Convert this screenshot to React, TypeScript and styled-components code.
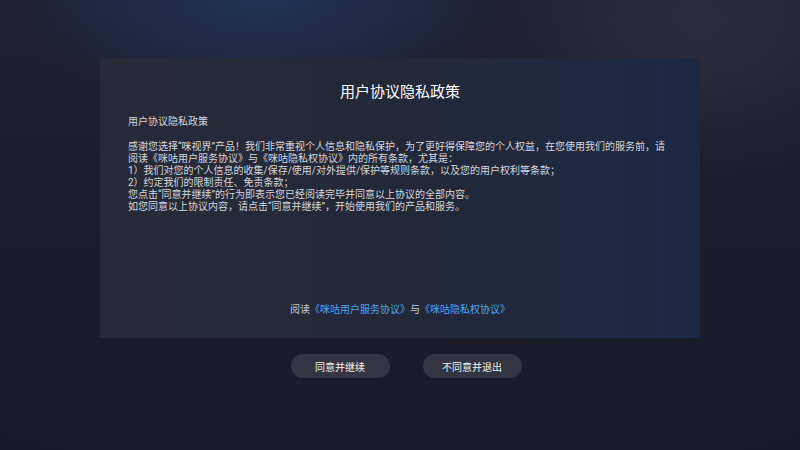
import React from "react";
import styled, { createGlobalStyle } from "styled-components";

const GlobalStyle = createGlobalStyle`
  html, body {
    margin: 0;
    padding: 0;
    width: 800px;
    height: 450px;
    overflow: hidden;
    background: #1a1b28;
  }
  * { box-sizing: border-box; }
`;

const Screen = styled.div`
  width: 800px;
  height: 450px;
  padding-top: 58px;
  display: flex;
  flex-direction: column;
  align-items: center;
  font-family: Roboto, "Noto Sans CJK SC", sans-serif;
  background:
    radial-gradient(ellipse 260px 110px at 260px 0px, rgba(34, 58, 100, 0.75), rgba(34, 58, 100, 0) 100%),
    radial-gradient(ellipse 220px 160px at 700px 20px, rgba(52, 50, 66, 0.7), rgba(52, 50, 66, 0) 100%),
    radial-gradient(ellipse 500px 200px at 400px 470px, rgba(28, 28, 42, 0.6), rgba(28, 28, 42, 0) 100%),
    linear-gradient(180deg, #1f2030 0%, #1b1c2a 60%, #191a27 100%);
`;

const Panel = styled.section`
  width: 600px;
  height: 280px;
  padding: 24px 28px 22px;
  display: flex;
  flex-direction: column;
  background: linear-gradient(90deg, #282a38 0%, #232839 50%, #1c2842 100%);
`;

const Title = styled.h1`
  margin: 0;
  font-size: 15px;
  line-height: 20px;
  font-weight: 400;
  color: #ffffff;
  text-align: center;
`;

const Heading = styled.div`
  margin-top: 14px;
  font-size: 10px;
  line-height: 12px;
  color: #d6d8de;
`;

const Body = styled.div`
  margin-top: 13px;
  display: flex;
  flex-direction: column;
`;

const Line = styled.div`
  font-size: 10px;
  line-height: 12px;
  color: #d6d8de;
  white-space: nowrap;
`;

const LinkRow = styled.div`
  margin-top: auto;
  font-size: 10px;
  line-height: 12px;
  color: #c9ccd4;
  text-align: center;
`;

const Link = styled.span`
  color: #4ba6ec;
`;

const Buttons = styled.div`
  margin-top: 16px;
  padding-left: 12px;
  display: flex;
  gap: 33px;
`;

const Button = styled.button`
  width: 99px;
  height: 24px;
  border: none;
  border-radius: 12px;
  background: #333542;
  color: #f2f3f6;
  font-family: Roboto, "Noto Sans CJK SC", sans-serif;
  font-size: 10px;
  padding: 0;
  cursor: pointer;
`;

const lines = [
  "感谢您选择\u201C咪视界\u201D产品！我们非常重视个人信息和隐私保护，为了更好得保障您的个人权益，在您使用我们的服务前，请",
  "阅读《咪咕用户服务协议》与《咪咕隐私权协议》内的所有条款，尤其是：",
  "1）我们对您的个人信息的收集/保存/使用/对外提供/保护等规则条款，以及您的用户权利等条款；",
  "2）约定我们的限制责任、免责条款；",
  "您点击\u201C同意并继续\u201D的行为即表示您已经阅读完毕并同意以上协议的全部内容。",
  "如您同意以上协议内容，请点击\u201C同意并继续\u201D，开始使用我们的产品和服务。",
];

export default function App() {
  return (
    <>
      <GlobalStyle />
      <Screen>
        <Panel>
          <Title>用户协议隐私政策</Title>
          <Heading>用户协议隐私政策</Heading>
          <Body>
            {lines.map((l, i) => (
              <Line key={i}>{l}</Line>
            ))}
          </Body>
          <LinkRow>
            阅读<Link>《咪咕用户服务协议》</Link>与<Link>《咪咕隐私权协议》</Link>
          </LinkRow>
        </Panel>
        <Buttons>
          <Button>同意并继续</Button>
          <Button>不同意并退出</Button>
        </Buttons>
      </Screen>
    </>
  );
}
